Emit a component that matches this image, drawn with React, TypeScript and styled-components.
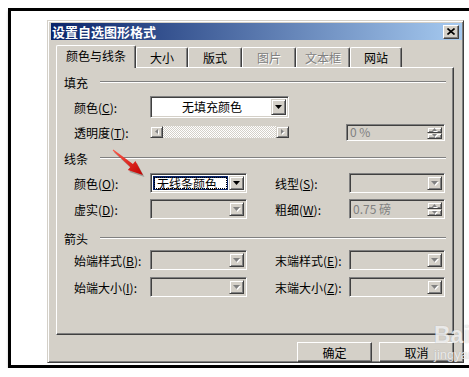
import styled, { createGlobalStyle } from "styled-components";

const GlobalStyle = createGlobalStyle`
  html, body {
    margin: 0;
    padding: 0;
    background: #fff;
    overflow: hidden;
  }
  body {
    font-family: "Noto Sans CJK SC", "Noto Sans", sans-serif;
    font-size: 12px;
    color: #000;
  }
`;

const Frame = styled.div`
  position: relative;
  margin: 8px 0 0 8px;
  width: 461px;
  height: 360px;
  box-sizing: border-box;
  border: 3px solid #000;
  border-right: none;
  background: #fff;
  overflow: hidden;
  padding: 9px 0 0 36px;
  box-shadow: 1px 3px 3px rgba(0, 0, 0, 0.45);
`;

const Dialog = styled.div`
  width: 417px;
  box-sizing: border-box;
  background: #d4d0c8;
  border: 1px solid;
  border-color: #d4d0c8 #404040 #404040 #d4d0c8;
  box-shadow: inset 1px 1px #fff, inset -1px -1px #808080;
  padding: 2px 1px 0 3px;
`;

const TitleBar = styled.div`
  height: 17px;
  display: flex;
  align-items: center;
  justify-content: space-between;
  background: linear-gradient(to right, #0a246a, #a6caf0);
  padding: 0 3px 0 1px;
`;

const Title = styled.span`
  color: #fff;
  font-weight: bold;
  font-size: 13px;
  line-height: 17px;
`;

const CloseBtn = styled.div`
  width: 16px;
  height: 14px;
  box-sizing: border-box;
  background: #d4d0c8;
  border: 1px solid;
  border-color: #fff #404040 #404040 #fff;
  box-shadow: inset -1px -1px #808080;
  display: flex;
  align-items: center;
  justify-content: center;
`;

const TabStrip = styled.div`
  position: relative;
  z-index: 1;
  display: flex;
  align-items: flex-end;
  height: 22px;
  margin: 5px 0 0 5px;
`;

const Tab = styled.div<{ $w: number; $active?: boolean; $off?: boolean }>`
  width: ${(p) => p.$w}px;
  height: ${(p) => (p.$active ? 23 : 20)}px;
  margin-bottom: ${(p) => (p.$active ? -1 : 0)}px;
  box-sizing: border-box;
  background: #d4d0c8;
  border-top: 1px solid #fff;
  border-left: 1px solid #fff;
  border-right: 1px solid #404040;
  border-top-left-radius: 2px;
  border-top-right-radius: 2px;
  box-shadow: inset -1px 0 #808080;
  display: flex;
  align-items: center;
  justify-content: center;
  padding-bottom: ${(p) => (p.$active ? 3 : 0)}px;
  color: ${(p) => (p.$off ? "#808080" : "#000")};
  text-shadow: ${(p) => (p.$off ? "1px 1px #fff" : "none")};
`;

const Panel = styled.div`
  width: 398px;
  height: 268px;
  margin-left: 5px;
  box-sizing: border-box;
  border-top: 1px solid #fff;
  border-left: 1px solid #fff;
  border-right: 1px solid #404040;
  border-bottom: 1px solid #404040;
  box-shadow: inset -1px -1px #808080;
  padding: 7px 0 0 7px;
`;

const Heading = styled.div<{ $mt?: number }>`
  display: flex;
  align-items: center;
  width: 382px;
  height: 14px;
  margin-top: ${(p) => p.$mt ?? 0}px;
`;

const HeadText = styled.span`
  width: 36px;
`;

const Rule = styled.div`
  flex: 1;
  border-top: 1px solid #808080;
  border-bottom: 1px solid #fff;
`;

const Row = styled.div<{ $h: number; $mt: number }>`
  display: flex;
  align-items: center;
  height: ${(p) => p.$h}px;
  margin-top: ${(p) => p.$mt}px;
  padding-left: 10px;
`;

const Label = styled.span<{ $right?: boolean }>`
  width: ${(p) => (p.$right ? 74 : 76)}px;
  margin-left: ${(p) => (p.$right ? 28 : 0)}px;
  white-space: nowrap;
`;

const Sunken = styled.div<{ $w: number; $h: number; $white?: boolean; $ml?: number }>`
  width: ${(p) => p.$w}px;
  height: ${(p) => p.$h}px;
  margin-left: ${(p) => p.$ml ?? 0}px;
  box-sizing: border-box;
  display: flex;
  align-items: stretch;
  padding: 2px;
  background: ${(p) => (p.$white ? "#fff" : "#d4d0c8")};
  border: 1px solid;
  border-color: #808080 #fff #fff #808080;
  box-shadow: inset 1px 1px #404040, inset -1px -1px #d4d0c8;
`;

const FieldText = styled.div<{ $center?: boolean; $off?: boolean }>`
  flex: 1;
  display: flex;
  align-items: center;
  justify-content: ${(p) => (p.$center ? "center" : "flex-start")};
  padding-left: ${(p) => (p.$center ? 0 : 1)}px;
  line-height: 12px;
  color: ${(p) => (p.$off ? "#808080" : "#000")};
  white-space: nowrap;
`;

const FocusText = styled.div`
  flex: 1;
  margin-right: 1px;
  border: 2px solid #0a246a;
  border-width: 2px 1px 1px 2px;
  display: flex;
  align-items: center;
  padding-left: 2px;
  line-height: 12px;
  outline: 1px dotted #000;
  outline-offset: -2px;
  white-space: nowrap;
`;

const Raised = styled.div<{ $w: number }>`
  width: ${(p) => p.$w}px;
  box-sizing: border-box;
  background: #d4d0c8;
  border: 1px solid;
  border-color: #d4d0c8 #404040 #404040 #d4d0c8;
  box-shadow: inset 1px 1px #fff, inset -1px -1px #808080;
  display: flex;
  align-items: center;
  justify-content: center;
`;

const SpinCol = styled.div`
  width: 15px;
  display: flex;
  flex-direction: column;
  & > div {
    flex: 1;
  }
`;

const Slider = styled.div`
  width: 139px;
  height: 12px;
  display: flex;
  justify-content: space-between;
  background: repeating-conic-gradient(#fff 0 25%, #d4d0c8 0 50%) 0 0 / 2px 2px;
`;

const ButtonRow = styled.div`
  display: flex;
  justify-content: flex-end;
  gap: 7px;
  width: 403px;
  margin-top: 7px;
`;

const PushButton = styled.div`
  width: 75px;
  height: 20px;
  box-sizing: border-box;
  background: #d4d0c8;
  border: 1px solid;
  border-color: #fff #404040 #404040 #fff;
  box-shadow: inset -1px -1px #808080;
  display: flex;
  align-items: center;
  justify-content: center;
`;

const Pointer = styled.svg`
  position: absolute;
  left: 94px;
  top: 134px;
`;

const Watermark = styled.div`
  position: absolute;
  left: 423px;
  top: 313px;
  font-family: "Liberation Sans", Arial, sans-serif;
  color: rgba(255, 255, 255, 0.75);
  text-shadow: 0 0 1px rgba(140, 140, 140, 0.6);
  line-height: 1;
  white-space: nowrap;
`;

const WmBig = styled.div`
  font-size: 23px;
  font-weight: bold;
`;

const WmSmall = styled.div`
  font-size: 13px;
  margin-top: 1px;
`;

type Dir = "down" | "up" | "left" | "right";

const Glyph = ({ dir, off, small }: { dir: Dir; off?: boolean; small?: boolean }) => {
  const a = small ? 5 : 7;
  const b = small ? 3 : 4;
  const horiz = dir === "down" || dir === "up";
  const w = horiz ? a : b;
  const h = horiz ? b : a;
  const pts = {
    down: `0,0 ${a},0 ${a / 2},${b}`,
    up: `0,${b} ${a},${b} ${a / 2},0`,
    left: `${b},0 ${b},${a} 0,${a / 2}`,
    right: `0,0 0,${a} ${b},${a / 2}`,
  }[dir];
  return (
    <svg width={w + 1} height={h + 1} viewBox={`0 0 ${w + 1} ${h + 1}`}>
      {off && <polygon points={pts} fill="#fff" transform="translate(1,1)" />}
      <polygon points={pts} fill={off ? "#808080" : "#000"} />
    </svg>
  );
};

const Combo = ({ w, h, text, off }: { w: number; h: number; text?: string; off?: boolean }) => (
  <Sunken $w={w} $h={h} $white={!off}>
    <FieldText $center>{text}</FieldText>
    <Raised $w={15}>
      <Glyph dir="down" off={off} />
    </Raised>
  </Sunken>
);

const Spin = ({ w, h, text, ml }: { w: number; h: number; text: string; ml?: number }) => (
  <Sunken $w={w} $h={h} $ml={ml}>
    <FieldText $off>{text}</FieldText>
    <SpinCol>
      <Raised $w={15}>
        <Glyph dir="up" off small />
      </Raised>
      <Raised $w={15}>
        <Glyph dir="down" off small />
      </Raised>
    </SpinCol>
  </Sunken>
);

export default function App() {
  return (
    <>
      <GlobalStyle />
      <Frame>
        <Dialog>
          <TitleBar>
            <Title>设置自选图形格式</Title>
            <CloseBtn>
              <svg width="8" height="7" viewBox="0 0 8 7">
                <path d="M0.5 0.5L7.5 6.5M7.5 0.5L0.5 6.5" stroke="#000" strokeWidth="1.6" />
              </svg>
            </CloseBtn>
          </TitleBar>
          <TabStrip>
            <Tab $active $w={80}>颜色与线条</Tab>
            <Tab $w={52}>大小</Tab>
            <Tab $w={54}>版式</Tab>
            <Tab $w={54} $off>图片</Tab>
            <Tab $w={54} $off>文本框</Tab>
            <Tab $w={52}>网站</Tab>
          </TabStrip>
          <Panel>
            <Heading>
              <HeadText>填充</HeadText>
              <Rule />
            </Heading>
            <Row $h={22} $mt={7}>
              <Label>颜色(<u>C</u>):</Label>
              <Combo w={139} h={22} text="无填充颜色" />
            </Row>
            <Row $h={20} $mt={4}>
              <Label>透明度(<u>T</u>):</Label>
              <Slider>
                <Raised $w={13}>
                  <Glyph dir="left" off small />
                </Raised>
                <Raised $w={13}>
                  <Glyph dir="right" off small />
                </Raised>
              </Slider>
              <Spin w={99} h={17} text="0 %" ml={57} />
            </Row>

            <Heading $mt={9}>
              <HeadText>线条</HeadText>
              <Rule />
            </Heading>
            <Row $h={20} $mt={8}>
              <Label>颜色(<u>O</u>):</Label>
              <Sunken $w={97} $h={20} $white>
                <FocusText>无线条颜色</FocusText>
                <Raised $w={15}>
                  <Glyph dir="down" />
                </Raised>
              </Sunken>
              <Label $right>线型(<u>S</u>):</Label>
              <Combo w={96} h={20} off />
            </Row>
            <Row $h={20} $mt={6}>
              <Label>虚实(<u>D</u>):</Label>
              <Combo w={97} h={20} off />
              <Label $right>粗细(<u>W</u>):</Label>
              <Spin w={96} h={20} text="0.75 磅" />
            </Row>

            <Heading $mt={12}>
              <HeadText>箭头</HeadText>
              <Rule />
            </Heading>
            <Row $h={20} $mt={5}>
              <Label>始端样式(<u>B</u>):</Label>
              <Combo w={97} h={20} off />
              <Label $right>末端样式(<u>E</u>):</Label>
              <Combo w={96} h={20} off />
            </Row>
            <Row $h={20} $mt={7}>
              <Label>始端大小(<u>I</u>):</Label>
              <Combo w={97} h={20} off />
              <Label $right>末端大小(<u>Z</u>):</Label>
              <Combo w={96} h={20} off />
            </Row>
          </Panel>
          <ButtonRow>
            <PushButton>确定</PushButton>
            <PushButton>取消</PushButton>
          </ButtonRow>
        </Dialog>

        <Pointer width="45" height="38" viewBox="0 0 45 38">
          <defs>
            <linearGradient id="redg" x1="0" y1="0" x2="1" y2="1">
              <stop offset="0" stopColor="#ff5a4a" />
              <stop offset="1" stopColor="#c00000" />
            </linearGradient>
          </defs>
          <polygon
            points="8.3,4.6 27.9,19 30.4,15.9 38,30 22.8,25.1 25.3,22 7.7,5.4"
            fill="#000"
            opacity="0.25"
            transform="translate(1.5,2)"
          />
          <polygon
            points="8.3,4.6 27.9,19 30.4,15.9 38,30 22.8,25.1 25.3,22 7.7,5.4"
            fill="url(#redg)"
          />
        </Pointer>

        <Watermark>
          <WmBig>Bai</WmBig>
          <WmSmall>jingyan</WmSmall>
        </Watermark>
      </Frame>
    </>
  );
}
